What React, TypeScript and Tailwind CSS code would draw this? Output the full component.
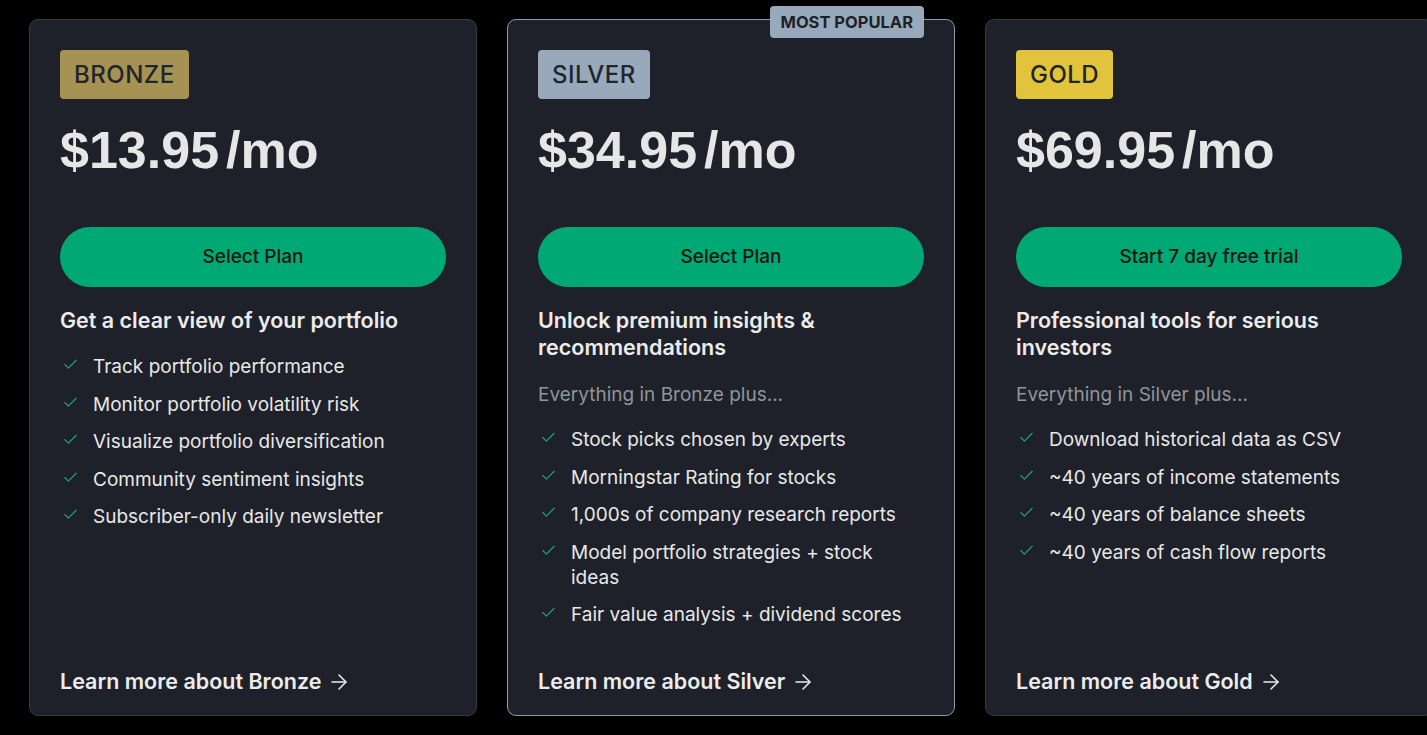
import { Check, ArrowRight } from "lucide-react";

type Plan = {
  name: string;
  badge: string;
  price: string;
  cta: string;
  heading: string;
  intro?: string;
  features: string[];
  popular?: boolean;
};

const plans: Plan[] = [
  {
    name: "BRONZE",
    badge: "bg-[#a69353]",
    price: "$13.95",
    cta: "Select Plan",
    heading: "Get a clear view of your portfolio",
    features: [
      "Track portfolio performance",
      "Monitor portfolio volatility risk",
      "Visualize portfolio diversification",
      "Community sentiment insights",
      "Subscriber-only daily newsletter",
    ],
  },
  {
    name: "SILVER",
    badge: "bg-[#97a9ba]",
    price: "$34.95",
    cta: "Select Plan",
    heading: "Unlock premium insights & recommendations",
    intro: "Everything in Bronze plus...",
    popular: true,
    features: [
      "Stock picks chosen by experts",
      "Morningstar Rating for stocks",
      "1,000s of company research reports",
      "Model portfolio strategies + stock ideas",
      "Fair value analysis + dividend scores",
    ],
  },
  {
    name: "GOLD",
    badge: "bg-[#e1c43b]",
    price: "$69.95",
    cta: "Start 7 day free trial",
    heading: "Professional tools for serious investors",
    intro: "Everything in Silver plus...",
    features: [
      "Download historical data as CSV",
      "~40 years of income statements",
      "~40 years of balance sheets",
      "~40 years of cash flow reports",
    ],
  },
];

function PlanCard({ plan }: { plan: Plan }) {
  const label = plan.name.charAt(0) + plan.name.slice(1).toLowerCase();
  return (
    <div
      className={`relative flex h-[697px] w-[448px] shrink-0 flex-col rounded-[9px] border bg-[#1e2129] px-[30px] pt-[30px] pb-[20px] ${
        plan.popular ? "border-[#8e9aa6]" : "border-[#363a41]"
      }`}
    >
      {/* most popular tag */}
      {plan.popular && (
        <div className="absolute -top-[14px] right-[30px] flex h-[32px] items-center rounded-[4px] bg-[#97a9ba] px-[11px] text-[16.5px] font-bold text-[#1e2129]">
          MOST POPULAR
        </div>
      )}

      <div className="flex">
        <span
          className={`flex h-[49px] items-center rounded-[4px] px-[14px] text-[24px] font-medium tracking-[0.02em] text-[#1f252d] ${plan.badge}`}
        >
          {plan.name}
        </span>
      </div>

      <div className="mt-[20px] flex h-[62px] items-center text-[52px] font-bold leading-none text-[#e6e6e6] [font-family:'Liberation_Sans',Arial,sans-serif]">
        <span>{plan.price}</span>
        <span className="ml-[7px]">/mo</span>
      </div>

      <button className="mt-[46px] h-[60px] w-full shrink-0 rounded-full bg-[#00a874] text-[19px] font-medium text-[#0d1712]">
        {plan.cta}
      </button>

      <h3 className="mt-[20px] text-[21.5px] font-semibold leading-[27px] text-[#ececec]">
        {plan.heading}
      </h3>

      {plan.intro && (
        <p className="mt-[21px] text-[19px] leading-[25px] text-[#8e959c]">{plan.intro}</p>
      )}

      <ul className="mt-[20px] flex flex-col gap-[12.5px]">
        {plan.features.map((f) => (
          <li key={f} className="flex text-[19px] leading-[25px] text-[#e8e8e8]">
            <span className="w-[33px] shrink-0 pt-[2px] pl-[2px]">
              <Check className="h-[17px] w-[17px] text-[#1aa872]" strokeWidth={1.6} />
            </span>
            <span>{f}</span>
          </li>
        ))}
      </ul>

      <a href="#" className="mt-auto flex items-center gap-[6px] text-[21.5px] font-semibold leading-[27px] text-[#ececec]">
        Learn more about {label}
        <ArrowRight className="h-[24px] w-[24px]" strokeWidth={1.5} />
      </a>
    </div>
  );
}

export default function App() {
  return (
    <div className="h-[735px] w-full overflow-hidden bg-black font-['Inter',sans-serif]">
      <div className="flex gap-[30px] pt-[19px] pl-[29px]">
        {plans.map((p) => (
          <PlanCard key={p.name} plan={p} />
        ))}
      </div>
    </div>
  );
}
